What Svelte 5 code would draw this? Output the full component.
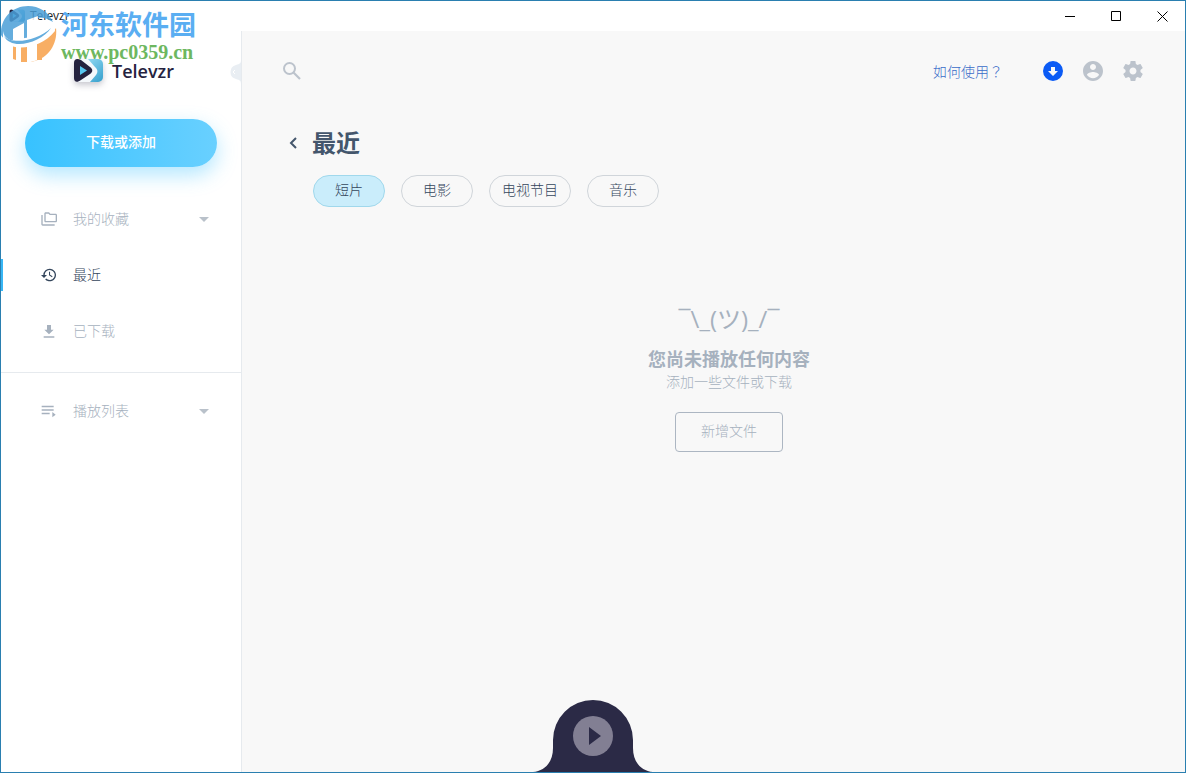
<script lang="ts">
	type Item = { id: string; label: string; icon: string; expandable?: boolean };

	const library: Item[] = [
		{ id: 'collection', label: '我的收藏', icon: 'folders', expandable: true },
		{ id: 'recent', label: '最近', icon: 'history' },
		{ id: 'downloaded', label: '已下载', icon: 'download' }
	];
	const playlists: Item[] = [
		{ id: 'playlists', label: '播放列表', icon: 'playlist', expandable: true }
	];
	const filters = ['短片', '电影', '电视节目', '音乐'];

	const icons: Record<string, string> = {
		folders:
			'M2.500 6H.500v14c0 1.100.9 2 2 2h18v-2h-18V6zm19.500-2h-8l-2-2H7c-1.100 0-2 .9-2 2v11c0 1.100.9 2 2 2h15c1.100 0 2-.9 2-2V6c0-1.100-.9-2-2-2zm0 11H7V4h4.170l2 2H22v9z',
		history:
			'M13 2.500A9.500 9.500 0 0 0 3.500 12H0l4.500 4.500L9 12H5.500a7.500 7.500 0 1 1 2.200 5.300l-1.420 1.420A9.500 9.500 0 1 0 13 2.500zM12 7v5.500l4.500 2.700.8-1.300-3.700-2.200V7H12z',
		download: 'M19 10h-4V3H9v7H5l7 7 7-7zM4 20v2h16v-2H4z',
		playlist: 'M1 4h18v2.300H1zM1 9.300h18v2.300H1zM1 14.600h12v2.300H1zM17 13.500v8l5-4z'
	};

	let current = $state('recent');
	let filter = $state('短片');
</script>

{#snippet navItem(item: Item)}
	<li>
		<button
			class="nav-item"
			class:active={current === item.id}
			onclick={() => (current = item.id)}
		>
			<svg class="nav-icon" viewBox="0 0 24 24" aria-hidden="true"><path d={icons[item.icon]} /></svg>
			<span>{item.label}</span>
			{#if item.expandable}
				<svg class="caret" viewBox="0 0 10 5" aria-hidden="true"><path d="M0 0h10L5 5z" /></svg>
			{/if}
		</button>
	</li>
{/snippet}

{#snippet logo()}
	<svg class="logo" viewBox="0 0 30 26" aria-hidden="true">
		<defs>
			<linearGradient id="sky" x1="0" y1="0" x2="1" y2="1">
				<stop offset="0" stop-color="#a5e6fb" />
				<stop offset="1" stop-color="#359fcc" />
			</linearGradient>
		</defs>
		<rect x="4" y="1" width="26" height="23" rx="5" fill="url(#sky)" />
		<path
			d="M8 1h7l7 8c3 3 3 5 1 8l-6 7H7c-3 0-5-2-5-5V6c0-3 3-5 6-5z"
			fill="#f4f8fb"
		/>
		<path
			d="M1 5c0-4 3-5 7-3l9 7c3 2 3 5 0 7l-9 6c-4 3-7 2-7-2z"
			fill="#25233f"
		/>
		<path d="M7 8v9l7-4.500z" fill="#58c8f0" />
	</svg>
{/snippet}

<div class="window">
	<header class="titlebar">
		<div class="app-name">
			{@render logo()}
			<span>Televzr</span>
		</div>
		<div class="window-controls">
			<button aria-label="最小化">
				<svg viewBox="0 0 11 11"><path d="M0 5.500h10" /></svg>
			</button>
			<button aria-label="最大化">
				<svg viewBox="0 0 11 11"><path d="M.5.500h9v9h-9z" /></svg>
			</button>
			<button aria-label="关闭">
				<svg viewBox="0 0 11 11"><path d="M.5.500l10 10M10.500.500l-10 10" /></svg>
			</button>
		</div>
	</header>

	<div class="body">
		<aside class="sidebar">
			<div class="brand">
				{@render logo()}
				<span>Televzr</span>
			</div>
			<button class="collapse" aria-label="收起侧栏">
				<svg viewBox="0 0 15 24">
					<path d="M15 0c0 3-1 4-5 5a7.200 7.200 0 0 0 0 14c4 1 5 2 5 5z" fill="#e9eef3" />
					<path d="M9 10l-2 2 2 2" fill="none" stroke="#fff" />
				</svg>
			</button>

			<button class="add">下载或添加</button>

			<nav>
				<ul>
					{#each library as item (item.id)}
						{@render navItem(item)}
					{/each}
				</ul>
				<ul class="playlists">
					{#each playlists as item (item.id)}
						{@render navItem(item)}
					{/each}
				</ul>
			</nav>
		</aside>

		<main>
			<div class="toolbar">
				<button class="icon-button" aria-label="搜索">
					<svg class="search" viewBox="0 0 18 18">
						<circle cx="6.500" cy="6.500" r="5.500" fill="none" stroke="currentColor" stroke-width="2" />
						<path d="M10.500 10.500l6.500 6.500" stroke="currentColor" stroke-width="2.200" />
					</svg>
				</button>
				<div class="actions">
					<a href="#help">如何使用？</a>
					<button class="icon-button downloads" aria-label="下载">
						<svg viewBox="2 2 20 20">
							<path d="M12 2a10 10 0 1 0 0 20 10 10 0 0 0 0-20zm-2 6h4v4h3l-5 5-5-5h3z" />
						</svg>
					</button>
					<button class="icon-button" aria-label="帐户">
						<svg viewBox="2 2 20 20">
							<path
								d="M12 2C6.480 2 2 6.480 2 12s4.480 10 10 10 10-4.480 10-10S17.520 2 12 2zm0 3c1.660 0 3 1.340 3 3s-1.340 3-3 3-3-1.340-3-3 1.340-3 3-3zm0 14.200c-2.500 0-4.710-1.280-6-3.220.03-1.990 4-3.080 6-3.080 1.990 0 5.970 1.090 6 3.080-1.290 1.940-3.500 3.220-6 3.220z"
							/>
						</svg>
					</button>
					<button class="icon-button" aria-label="设置">
						<svg viewBox="2 2 20 20">
							<path
								d="M19.430 12.980c.04-.32.070-.64.070-.98s-.03-.66-.07-.98l2.110-1.650c.19-.15.240-.42.120-.64l-2-3.460c-.12-.22-.39-.3-.61-.22l-2.490 1c-.52-.4-1.080-.73-1.690-.98l-.38-2.650C14.460 2.180 14.250 2 14 2h-4c-.25 0-.46.180-.49.420l-.38 2.650c-.61.250-1.170.590-1.690.980l-2.490-1c-.23-.09-.49 0-.61.220l-2 3.460c-.13.220-.07.490.12.640l2.110 1.650c-.04.320-.07.650-.07.980s.03.660.070.980l-2.110 1.650c-.19.150-.24.420-.12.640l2 3.460c.12.220.39.300.61.220l2.490-1c.52.400 1.080.730 1.690.980l.38 2.650c.03.240.24.420.49.420h4c.25 0 .46-.18.490-.42l.38-2.650c.61-.25 1.170-.59 1.690-.98l2.490 1c.23.090.49 0 .61-.22l2-3.460c.12-.22.070-.49-.12-.64l-2.110-1.650zM12 15.500c-1.930 0-3.500-1.570-3.500-3.500s1.570-3.500 3.500-3.500 3.500 1.570 3.500 3.500-1.570 3.500-3.500 3.500z"
							/>
						</svg>
					</button>
				</div>
			</div>

			<div class="heading">
				<button class="back" aria-label="返回">
					<svg viewBox="0 0 8 12"><path d="M7 1L2 6l5 5" /></svg>
				</button>
				<h1>最近</h1>
			</div>

			<div class="content">
				<div class="filters">
					{#each filters as name (name)}
						<button class:selected={filter === name} onclick={() => (filter = name)}>{name}</button>
					{/each}
				</div>

				<section class="empty">
					<p class="shrug">¯\_(ツ)_/¯</p>
					<h2>您尚未播放任何内容</h2>
					<p class="hint">添加一些文件或下载</p>
					<button>新增文件</button>
				</section>
			</div>
		</main>
	</div>

	<button class="player" aria-label="播放">
		<svg viewBox="0 0 120 72">
			<path d="M0 72c12-1 20-10 20-24V40a40 40 0 0 1 80 0v8c0 14 8 23 20 24z" fill="#2b2a46" />
			<circle cx="60" cy="36" r="20" fill="#827f93" />
			<path d="M56 27v18l12-9z" fill="#2b2a46" />
		</svg>
	</button>

	<div class="watermark">
		<svg viewBox="1 6 58 58" aria-hidden="true">
			<path d="M1 35C0 19 12 6 28 6c11 0 21 6 25 16-6-4-11-5-15-4V36L12 40C7 40 3 39 1 35z" fill="#4b9fd8" />
			<path d="M56 28c2 16-8 32-26 34H14V46C30 48 47 42 56 28z" fill="#f7a04a" />
			<path d="M13 29l11-6v39H13zM27 20l11-4v44l-11 3z" fill="#fff" />
			<path d="M16 46v14l-3-1V46zM24 46v16h-3V46zM27 45v17h-4V45z" fill="#f7a04a" />
			<path d="M37 43v17h5V41z" fill="#f7a04a" />
			<path d="M3 31c2 16 32 14 50-6 1 2 2 4 2 6-16 20-46 21-52 8z" fill="#fff" />
			<path d="M4 36c8 9 33 5 47-8-10 15-40 23-47 8z" fill="#4b9fd8" />
		</svg>
		<div>
			<strong>河东软件园</strong>
			<em>www.pc0359.cn</em>
		</div>
	</div>
</div>

<style>
	:global(body) {
		margin: 0;
	}

	.window {
		position: relative;
		display: flex;
		flex-direction: column;
		box-sizing: border-box;
		min-height: 100vh;
		border: 1px solid #2a7fb0;
		background: #fff;
		color: #44566c;
		font-family: 'Open Sans', 'Noto Sans CJK SC', sans-serif;
		font-size: 14px;
		font-weight: 300;
		line-height: 20px;
	}

	button {
		margin: 0;
		padding: 0;
		border: 0;
		background: none;
		color: inherit;
		font: inherit;
		cursor: pointer;
	}

	svg {
		display: block;
		flex: none;
	}

	h1,
	h2,
	p,
	ul {
		margin: 0;
		padding: 0;
	}

	ul {
		list-style: none;
	}

	.titlebar {
		display: flex;
		justify-content: space-between;
		height: 30px;
	}

	.app-name {
		display: flex;
		align-items: center;
		gap: 5px;
		padding-left: 8px;
		color: #222;
		font-size: 12px;
		font-weight: 400;
	}

	.app-name .logo {
		width: 16px;
		height: 14px;
	}

	.window-controls {
		display: flex;
	}

	.window-controls button {
		display: grid;
		place-items: center;
		width: 46px;
	}

	.window-controls svg {
		width: 11px;
		height: 11px;
		fill: none;
		stroke: #000;
	}

	.body {
		display: flex;
		flex: 1;
	}

	.sidebar {
		position: relative;
		flex: none;
		width: 240px;
		border-right: 1px solid #e6eaee;
	}

	.brand {
		display: flex;
		align-items: center;
		gap: 9px;
		height: 80px;
		padding-left: 72px;
		color: #25233f;
		font-size: 18px;
		font-weight: 600;
	}

	.brand .logo {
		width: 30px;
		height: 26px;
		filter: drop-shadow(0 3px 3px rgba(37, 35, 63, 0.25));
	}

	.collapse {
		position: absolute;
		top: 29px;
		right: 0;
	}

	.collapse svg {
		width: 15px;
		height: 24px;
	}

	.add {
		display: block;
		width: 192px;
		height: 48px;
		margin: 8px 24px 24px;
		padding-bottom: 2px;
		border-radius: 24px;
		background: linear-gradient(90deg, #37c2ff, #69d0ff);
		box-shadow: 0 8px 20px rgba(65, 196, 255, 0.4);
		color: #fff;
		font-weight: 500;
	}

	.nav-item {
		position: relative;
		display: flex;
		align-items: center;
		gap: 16px;
		width: 100%;
		height: 56px;
		padding: 0 32px 0 40px;
		color: #a6b1be;
		text-align: left;
	}

	.nav-item.active {
		color: #34465c;
	}

	.nav-item.active::before {
		position: absolute;
		top: 12px;
		left: 0;
		width: 2px;
		height: 32px;
		background: #37b6f5;
		content: '';
	}

	.nav-icon {
		width: 16px;
		height: 16px;
		fill: currentColor;
	}

	.caret {
		width: 10px;
		height: 5px;
		margin-left: auto;
		fill: #b9c1ca;
	}

	.playlists {
		margin-top: 13px;
		padding-top: 10px;
		border-top: 1px solid #e6eaee;
	}

	main {
		flex: 1;
		padding: 0 40px 72px 41px;
		background: #f8f8f8;
	}

	.toolbar,
	.actions {
		display: flex;
		align-items: center;
	}

	.toolbar {
		justify-content: space-between;
		height: 80px;
	}

	.actions {
		gap: 20px;
		padding-right: 2px;
	}

	.actions a {
		margin-right: 20px;
		color: #3a6cc8;
		font-family: 'Noto Sans CJK TC', sans-serif;
		text-decoration: none;
	}

	.icon-button {
		color: #bcc3cc;
	}

	.icon-button svg {
		width: 20px;
		height: 20px;
		fill: currentColor;
	}

	.icon-button .search {
		width: 18px;
		height: 18px;
	}

	.downloads {
		color: #0b5bf5;
	}

	.heading {
		display: flex;
		align-items: center;
		gap: 15px;
		margin-top: 16px;
		padding-left: 6px;
	}

	.back svg {
		width: 8px;
		height: 12px;
		fill: none;
		stroke: #44566c;
		stroke-width: 2;
	}

	h1 {
		font-size: 24px;
		font-weight: 700;
		line-height: 32px;
	}

	.content {
		padding: 16px 0 0 30px;
	}

	.filters {
		display: flex;
		gap: 16px;
	}

	.filters button {
		box-sizing: border-box;
		min-width: 72px;
		height: 32px;
		padding: 0 12px 2px;
		border: 1px solid #d0d5da;
		border-radius: 16px;
		color: #34465c;
	}

	.filters .selected {
		border-color: #a0d8ec;
		background: #caedfb;
	}

	.empty {
		display: flex;
		flex-direction: column;
		align-items: center;
		padding-top: 96px;
		color: #a6b1be;
	}

	.shrug {
		font-size: 24px;
		font-weight: 400;
		line-height: 32px;
	}

	h2 {
		margin-top: 12px;
		font-size: 18px;
		font-weight: 700;
		line-height: 24px;
	}

	.hint {
		margin-top: 1px;
	}

	.empty button {
		width: 108px;
		height: 40px;
		margin-top: 20px;
		padding-bottom: 2px;
		border: 1px solid #acb6c2;
		border-radius: 4px;
	}

	.player {
		position: absolute;
		bottom: 0;
		left: 50%;
		transform: translateX(-50%);
	}

	.player svg {
		width: 120px;
		height: 72px;
	}

	/* Site stamp laid over the window's top left corner */
	.watermark {
		position: absolute;
		top: 5px;
		left: 0;
		display: flex;
		gap: 2px;
		pointer-events: none;
	}

	.watermark svg {
		width: 58px;
		height: 58px;
		opacity: 0.85;
	}

	.watermark strong,
	.watermark em {
		display: block;
		font-style: normal;
		font-weight: 700;
		white-space: nowrap;
	}

	.watermark strong {
		color: #5aaef2;
		font-family: 'Noto Sans CJK SC', sans-serif;
		font-size: 27px;
		line-height: 36px;
	}

	.watermark em {
		color: #6db760;
		font-family: 'Liberation Serif', serif;
		font-size: 20px;
		line-height: 20px;
	}
</style>
